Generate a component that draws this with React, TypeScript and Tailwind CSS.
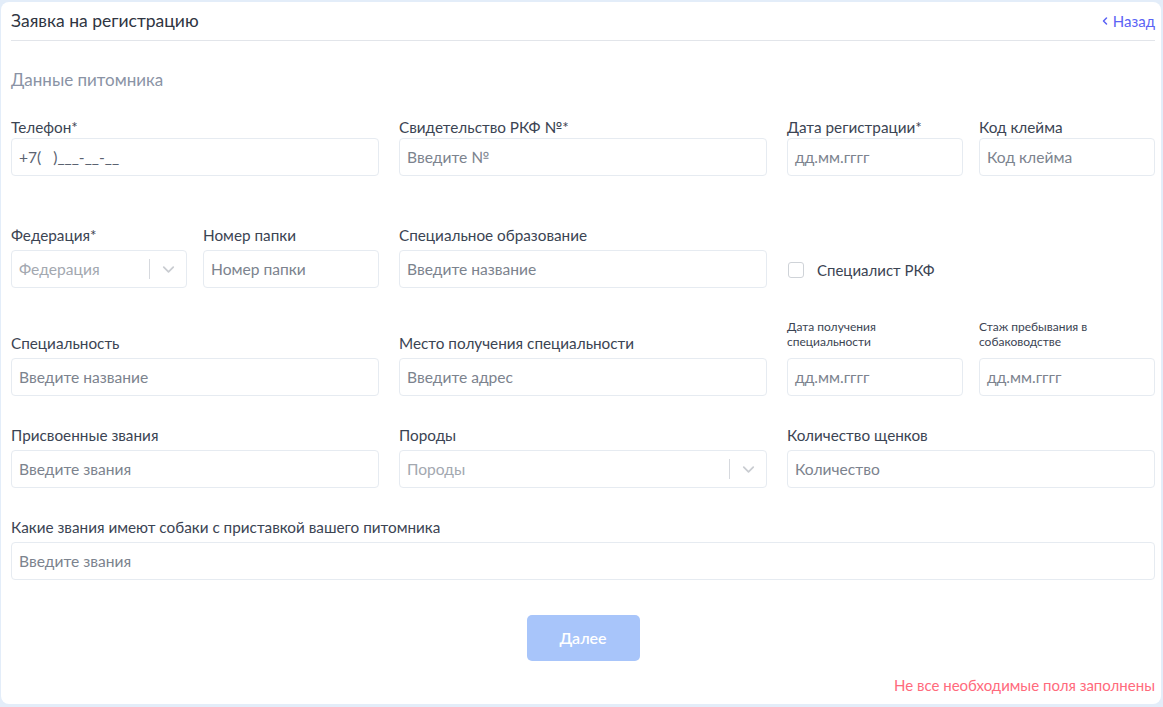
import React from "react";
import { ChevronLeft, ChevronDown } from "lucide-react";

const font = { fontFamily: "Lato, 'Noto Sans', sans-serif" };

function Label({ children, small, tight }: { children: React.ReactNode; small?: boolean; tight?: boolean }) {
  return small ? (
    <div className="text-[12px] leading-[15px] text-[#3b4453] mb-[9px]">{children}</div>
  ) : (
    <div className={`text-[15.3px] leading-[20px] text-[#3b4453] ${tight ? "mb-[1px]" : "mb-[5px]"}`}>{children}</div>
  );
}

function Input({ placeholder, dark }: { placeholder: string; dark?: boolean }) {
  return (
    <div
      className={`h-[38px] rounded-[4px] border border-[#e6ebf1] bg-white flex items-center px-[7px] pt-[1px] text-[15.6px] whitespace-pre ${
        dark ? "text-[#5a6270]" : "text-[#7c838e]"
      }`}
    >
      {placeholder}
    </div>
  );
}

function Select({ placeholder }: { placeholder: string }) {
  return (
    <div className="h-[38px] rounded-[4px] border border-[#e6ebf1] bg-white flex items-center pl-[7px] text-[15.6px] text-[#a3a8b0]">
      <span className="flex-1 pt-[1px]">{placeholder}</span>
      <span className="w-px h-[20px] bg-[#d6d9de]" />
      <span className="w-[36px] flex items-center justify-center text-[#c9ccd1]">
        <ChevronDown size={19} strokeWidth={2.2} />
      </span>
    </div>
  );
}

function Field({
  label,
  placeholder,
  small,
  tight,
  className,
  select,
  dark,
}: {
  label: React.ReactNode;
  placeholder: string;
  small?: boolean;
  tight?: boolean;
  className?: string;
  select?: boolean;
  dark?: boolean;
}) {
  return (
    <div className={`flex flex-col ${className ?? ""}`}>
      <Label small={small} tight={tight}>
        {label}
      </Label>
      {select ? <Select placeholder={placeholder} /> : <Input placeholder={placeholder} dark={dark} />}
    </div>
  );
}

export default function App() {
  return (
    <div className="min-h-[707px] bg-[#e3edf9] pt-[2px] pl-[1px] pr-[2px] pb-[3px]" style={font}>
      <div className="bg-white rounded-[8px] h-[702px] pl-[10px] pr-[6px] pt-[7px]">
        <div className="flex items-center justify-between border-b border-[#e2e5ea] pb-[7px]">
          <div className="text-[17.5px] leading-[24px] text-[#2f3542]">Заявка на регистрацию</div>
          <div className="flex items-center text-[15px] leading-[20px] text-[#5b63f5]">
            <ChevronLeft size={12} strokeWidth={3} className="mr-[2px]" />
            Назад
          </div>
        </div>

        <div className="mt-[28px] text-[17px] leading-[22px] text-[#8a93a5]">Данные питомника</div>

        {/* Row 1 */}
        <div className="mt-[26px] flex gap-5 items-end">
          <Field className="w-[368px]" tight label="Телефон*" placeholder="+7(   )___-__-__" dark />
          <Field className="w-[368px]" tight label="Свидетельство РКФ №*" placeholder="Введите №" />
          <div className="w-[368px] flex gap-4">
            <Field className="w-[176px]" tight label="Дата регистрации*" placeholder="дд.мм.гггг" />
            <Field className="w-[176px]" tight label="Код клейма" placeholder="Код клейма" />
          </div>
        </div>

        {/* Row 2 */}
        <div className="mt-[49px] flex gap-5 items-end">
          <div className="w-[368px] flex gap-4">
            <Field className="w-[176px]" label="Федерация*" placeholder="Федерация" select />
            <Field className="w-[176px]" label="Номер папки" placeholder="Номер папки" />
          </div>
          <Field className="w-[368px]" label="Специальное образование" placeholder="Введите название" />
          <div className="w-[368px] h-[38px] flex items-center pl-[1px] pt-[2px]">
            <span className="w-[16px] h-[16px] rounded-[3px] border border-[#cfd3d8] bg-white" />
            <span className="ml-[13px] text-[15px] text-[#3b4453]">Специалист РКФ</span>
          </div>
        </div>

        {/* Row 3 */}
        <div className="mt-[31px] flex gap-5 items-end">
          <Field className="w-[368px]" label="Специальность" placeholder="Введите название" />
          <Field className="w-[368px]" label="Место получения специальности" placeholder="Введите адрес" />
          <div className="w-[368px] flex gap-4 items-end">
            <Field
              className="w-[176px]"
              small
              label={
                <>
                  Дата получения
                  <br />
                  специальности
                </>
              }
              placeholder="дд.мм.гггг"
            />
            <Field
              className="w-[176px]"
              small
              label={
                <>
                  Стаж пребывания в
                  <br />
                  собаководстве
                </>
              }
              placeholder="дд.мм.гггг"
            />
          </div>
        </div>

        {/* Row 4 */}
        <div className="mt-[29px] flex gap-5 items-end">
          <Field className="w-[368px]" label="Присвоенные звания" placeholder="Введите звания" />
          <Field className="w-[368px]" label="Породы" placeholder="Породы" select />
          <Field className="w-[368px]" label="Количество щенков" placeholder="Количество" />
        </div>

        {/* Row 5 */}
        <div className="mt-[29px]">
          <Field label="Какие звания имеют собаки с приставкой вашего питомника" placeholder="Введите звания" />
        </div>

        <div className="mt-[35px] flex justify-center">
          <button className="w-[113px] h-[46px] rounded-[5px] bg-[#a8c5fa] text-white text-[16px] font-semibold">
            Далее
          </button>
        </div>

        <div className="mt-[14px] text-right text-[15px] leading-[20px] text-[#ff6a7c]">
          Не все необходимые поля заполнены
        </div>
      </div>
    </div>
  );
}
